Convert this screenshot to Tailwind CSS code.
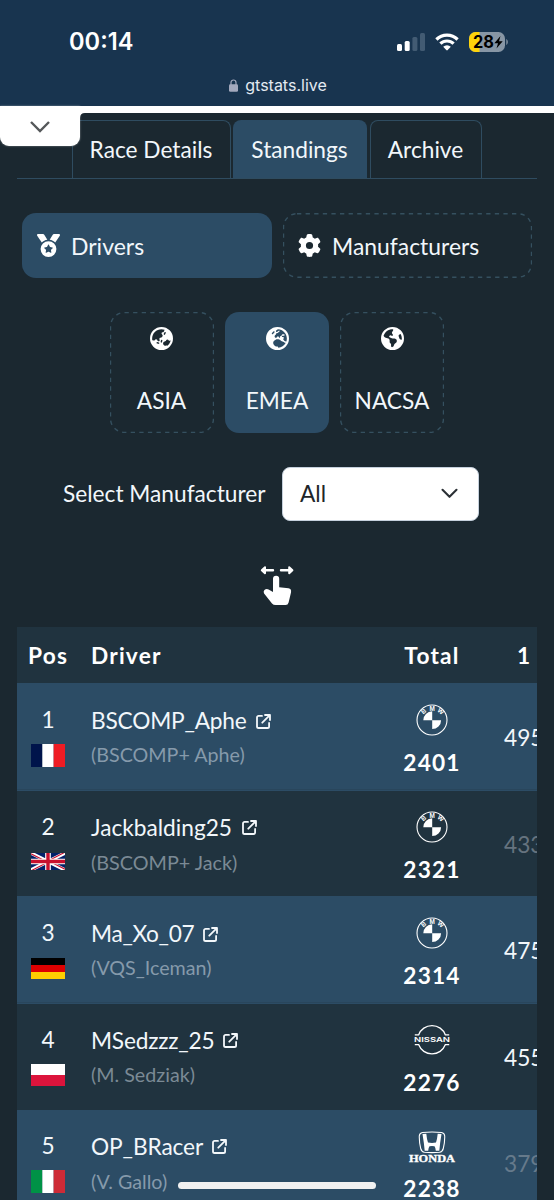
<!DOCTYPE html>
<html lang="en">
<head>
<meta charset="utf-8">
<title>gtstats.live</title>
<script src="https://cdn.jsdelivr.net/npm/@tailwindcss/browser@4"></script>
</head>
<body class="bg-[#1b2830]">
<svg class="hidden">
  <symbol id="ext" viewBox="0 0 15 15"><path d="M6 1.900H2.600A1.600 1.600 0 0 0 1 3.500V12.400A1.600 1.600 0 0 0 2.600 14H11.500A1.600 1.600 0 0 0 13.100 12.400V9M9 1H14V6M13.800 1.200L6.300 8.700" fill="none" stroke="#f4f8fb" stroke-width="1.800" stroke-linejoin="round" stroke-linecap="round"/></symbol>
  <symbol id="bmw" viewBox="0 0 32 32">
    <circle cx="16" cy="16" r="15" fill="none" stroke="#fff" stroke-width="1.100"/>
    <path d="M16.200 16.200V7.300A8.900 8.900 0 0 0 7.300 16.200ZM16.200 16.200V25.100A8.900 8.900 0 0 0 25.100 16.200Z" fill="#fff"/>
    <g fill="#fff" font-family="Liberation Sans, sans-serif" font-weight="700" font-size="6.400" text-anchor="middle">
      <text transform="translate(8.900 8.900) rotate(-40)">B</text><text x="16.200" y="6.600">M</text><text transform="translate(23.300 9) rotate(40)">W</text>
    </g>
  </symbol>
</svg>
<main class="relative w-[554px] h-[1200px] overflow-hidden text-[#f2f7fb] font-['Lato',sans-serif] text-[22.700px]">
  <header class="h-[106px] bg-[#18344f]">
    <div class="h-[70px] pt-[13px] pl-[69px] pr-[45px] flex items-center justify-between">
      <div class="font-['Inter',sans-serif] font-semibold text-[23.600px] leading-none text-white">00:14</div>
      <div class="flex items-center">
        <svg class="w-[29px] h-[20px]" viewBox="0 0 29 20"><rect x="0" y="12" width="5" height="7" rx="1.500" fill="#fff"/><rect x="7.700" y="9" width="5" height="10" rx="1.500" fill="#fff"/><rect x="15.400" y="5" width="5" height="14" rx="1.500" fill="#425b73"/><rect x="23" y="1" width="5" height="18" rx="1.500" fill="#425b73"/></svg>
        <svg class="ml-[9px] w-[24px] h-[18px]" viewBox="0 0 24 18"><g fill="none" stroke="#fff" stroke-width="3.200"><path d="M1.400 6.500A15 15 0 0 1 22.600 6.500"/><path d="M5.400 10.700A9.400 9.400 0 0 1 18.600 10.700"/></g><path d="M8.200 13.700A5.400 5.400 0 0 1 15.800 13.700L12.700 17.100Q12 17.700 11.300 17.100Z" fill="#fff"/></svg>
        <svg class="ml-[10px] w-[40px] h-[20px]" viewBox="0 0 40 20"><defs><clipPath id="batt"><rect width="36" height="20" rx="6.500"/></clipPath></defs><g clip-path="url(#batt)"><rect width="36" height="20" fill="#8796a5"/><rect width="10.500" height="20" fill="#fdd30a"/></g><path d="M37.300 7v6c2-.8 2-5.200 0-6z" fill="#8796a5"/><text x="4" y="16" font-family="Inter, sans-serif" font-weight="700" font-size="17" textLength="21" lengthAdjust="spacingAndGlyphs" fill="#000">28</text><path d="M31.500 4L25.300 11.200H29L27.500 16.500L33.700 9.200H30Z" fill="#000"/></svg>
      </div>
    </div>
    <div class="h-[30px] pl-[2px] flex items-center justify-center gap-[7px] font-['Inter',sans-serif] text-[16px] text-[#e3eaf2]">
      <svg class="w-[9px] h-[13px]" viewBox="0 0 9 13"><path d="M2 6V3.500a2.500 2.500 0 0 1 5 0V6" fill="none" stroke="#a3a9bd" stroke-width="1.200"/><rect y="5.300" width="9" height="7.400" rx="1.300" fill="#a3a9bd"/></svg>
      <span class="leading-none">gtstats.live</span>
    </div>
  </header>
  <div class="h-[7px] bg-white"></div>

  <nav class="mx-[17px] h-[66px] pt-[7px] pl-[55px] flex border-b border-[#2f4c60]">
    <div class="w-[159px] h-[58px] border border-b-0 border-[#2f4c60] rounded-t-[8px] flex items-center justify-center pt-[2px] pr-[1px]">Race Details</div>
    <div class="ml-[2px] w-[134px] h-[58px] bg-[#2c4c65] rounded-t-[8px] flex items-center justify-center pt-[2px] pr-[1px]">Standings</div>
    <div class="ml-[3px] w-[112px] h-[58px] border border-b-0 border-[#2f4c60] rounded-t-[8px] flex items-center justify-center pt-[2px] pr-[1px]">Archive</div>
  </nav>

  <section class="mt-[34px] ml-[22px] flex gap-[11px]">
    <div class="w-[250px] h-[65px] rounded-[14px] bg-[#2c4c65] flex items-center pl-[15px] gap-[11px]">
      <svg class="w-[23px] h-[23px]" viewBox="0 0 512 512" fill="#fff"><path d="M4.100 38.200C1.400 34.200 0 29.400 0 24.600C0 11 11 0 24.600 0H133.900c11.200 0 21.700 5.900 27.400 15.500l68.500 114.100c-48.200 6.100-91.300 28.600-123.400 61.900L4.100 38.200zm503.700 0L405.600 191.500c-32.100-33.300-75.200-55.800-123.400-61.900L350.700 15.500C356.500 5.900 366.900 0 378.100 0H487.400C501 0 512 11 512 24.600c0 4.800-1.400 9.600-4.100 13.600zM80 336a176 176 0 1 1 352 0A176 176 0 1 1 80 336zm184.400-94.900c-3.400-7-13.300-7-16.800 0l-22.400 45.400c-1.400 2.800-4 4.700-7 5.100L168 298.900c-7.700 1.100-10.700 10.500-5.200 16l36.300 35.400c2.200 2.200 3.200 5.200 2.700 8.300l-8.600 49.900c-1.300 7.600 6.700 13.500 13.600 9.900l44.800-23.600c2.700-1.400 6-1.400 8.700 0l44.800 23.600c6.900 3.600 14.900-2.200 13.600-9.900l-8.600-49.900c-.5-3 .5-6.100 2.700-8.300l36.300-35.400c5.600-5.400 2.500-14.800-5.200-16l-50.100-7.300c-3-.4-5.700-2.400-7-5.100l-22.400-45.400z"/></svg>
      <span class="pt-[1px] text-[23px]">Drivers</span>
    </div>
    <div class="relative w-[249px] h-[65px] flex items-center pl-[15px] gap-[11px]">
      <svg class="absolute inset-0 w-[249px] h-[65px]"><rect x=".5" y=".7" width="248" height="63.500" rx="13.500" fill="none" stroke="#35505f" stroke-width="1.400" stroke-dasharray="4.300 4.300"/></svg>
      <svg class="w-[23px] h-[23px]" viewBox="0 0 512 512" fill="#fff"><path d="M495.900 166.600c3.200 8.700 .5 18.400-6.400 24.600l-43.300 39.400c1.100 8.300 1.700 16.800 1.700 25.400s-.6 17.100-1.700 25.400l43.300 39.400c6.900 6.200 9.600 15.900 6.400 24.600c-4.400 11.900-9.700 23.300-15.800 34.300l-4.700 8.100c-6.600 11-14 21.400-22.100 31.200c-5.900 7.200-15.700 9.600-24.500 6.800l-55.700-17.700c-13.400 10.300-28.200 18.900-44 25.400l-12.500 57.100c-2 9.100-9 16.300-18.200 17.800c-13.800 2.300-28 3.500-42.500 3.500s-28.700-1.200-42.500-3.500c-9.200-1.500-16.200-8.700-18.200-17.800l-12.500-57.100c-15.800-6.500-30.600-15.100-44-25.400L83.100 425.900c-8.800 2.800-18.600 .3-24.500-6.800c-8.100-9.800-15.500-20.200-22.100-31.200l-4.700-8.100c-6.100-11-11.400-22.400-15.800-34.300c-3.200-8.700-.5-18.400 6.400-24.600l43.300-39.400C64.600 273.100 64 264.600 64 256s.6-17.100 1.700-25.400L22.400 191.200c-6.900-6.200-9.600-15.900-6.400-24.600c4.400-11.900 9.700-23.300 15.800-34.300l4.700-8.100c6.600-11 14-21.400 22.100-31.200c5.900-7.200 15.700-9.600 24.500-6.800l55.700 17.700c13.400-10.300 28.200-18.900 44-25.400l12.500-57.100c2-9.100 9-16.300 18.200-17.800C227.300 1.200 241.500 0 256 0s28.700 1.200 42.500 3.500c9.200 1.500 16.200 8.700 18.200 17.800l12.500 57.100c15.800 6.500 30.600 15.100 44 25.400l55.700-17.700c8.800-2.800 18.600-.3 24.500 6.800c8.100 9.800 15.500 20.200 22.100 31.200l4.700 8.100c6.100 11 11.400 22.400 15.800 34.300zM256 336a80 80 0 1 0 0-160 80 80 0 1 0 0 160z"/></svg>
      <span class="pt-[1px] text-[22.900px]">Manufacturers</span>
    </div>
  </section>

  <section class="mt-[34px] ml-[110px] flex gap-[11px]">
    <div class="relative w-[104px] h-[121px] pt-[15px] pr-[1px] flex flex-col items-center">
      <svg class="absolute inset-0 w-[104px] h-[121px]"><rect x=".5" y=".5" width="103" height="120" rx="14" fill="none" stroke="#35505f" stroke-width="1.400" stroke-dasharray="4.300 4.300"/></svg>
      <svg class="w-[23px] h-[23px]" viewBox="0 0 512 512" fill="#fff"><path d="M51.700 295.100l31.700 6.300c7.900 1.600 16-.9 21.700-6.600l15.400-15.400c11.600-11.600 31.100-8.400 38.400 6.200l9.300 18.500c4.800 9.600 14.600 15.700 25.400 15.700c15.200 0 26.100-14.600 21.700-29.200l-6-19.900c-4.600-15.400 6.900-30.900 23-30.900h2.300c13.400 0 25.900-6.700 33.300-17.800l10.700-16.100c5.600-8.500 5.300-19.600-.8-27.700l-16.100-21.500c-10.300-13.700-3.300-33.500 13.400-37.700l17-4.300c7.500-1.900 13.600-7.200 16.500-14.400l16.400-40.900C303.400 52.100 280.200 48 256 48C141.100 48 48 141.100 48 256c0 13.400 1.300 26.500 3.700 39.100zm407.700 4.600c-3-.3-6-.1-9 .8l-15.800 4.400c-6.700 1.900-13.800-.9-17.500-6.700l-2-3.100c-6-9.400-16.400-15.100-27.600-15.100s-21.600 5.700-27.600 15.100l-6.100 9.500c-1.400 2.200-3.400 4.100-5.700 5.300L312 330.100c-18.100 10.100-25.500 32.400-17 51.300l5.500 12.400c8.600 19.200 30.700 28.500 50.500 21.100l2.600-1c10-3.700 21.300-2.200 29.900 4.100l1.500 1.100c37.200-29.500 64.100-71.400 74.400-119.500zM0 256a256 256 0 1 1 512 0A256 256 0 1 1 0 256zm144.500 92.100c-2.100 8.600 3.100 17.300 11.600 19.400l32 8c8.600 2.100 17.300-3.100 19.400-11.600s-3.100-17.300-11.600-19.400l-32-8c-8.600-2.100-17.300 3.100-19.400 11.600zm92-20c-2.100 8.600 3.100 17.300 11.600 19.400s17.300-3.100 19.400-11.600l8-32c2.100-8.600-3.100-17.300-11.600-19.400s-17.300 3.100-19.400 11.600l-8 32zM343.200 113.700c-7.900-4-17.500-.7-21.500 7.200l-16 32c-4 7.900-.7 17.500 7.200 21.500s17.500 .7 21.500-7.200l16-32c4-7.900 .7-17.500-7.200-21.500z"/></svg>
      <span class="mt-[34px] leading-[34px]">ASIA</span>
    </div>
    <div class="w-[104px] h-[121px] pt-[15px] flex flex-col items-center bg-[#2c4c65] rounded-[14px]">
      <svg class="w-[23px] h-[23px]" viewBox="0 0 512 512" fill="#fff"><path d="M266.300 48.300L232.500 73.600c-5.400 4-8.500 10.400-8.500 17.100v9.100c0 6.800 5.500 12.300 12.300 12.300c2.400 0 4.800-.7 6.800-2.100l41.800-27.900c2-1.300 4.400-2.100 6.800-2.100h1c6.200 0 11.300 5.100 11.300 11.300c0 3-1.200 5.900-3.300 8l-19.900 19.900c-5.800 5.800-12.900 10.200-20.700 12.800l-26.500 8.800c-5.800 1.900-9.600 7.300-9.600 13.400c0 3.700-1.500 7.300-4.100 10l-17.900 17.900c-6.400 6.400-9.900 15-9.900 24v4.300c0 16.400 13.600 29.700 29.900 29.700c11 0 21.200-6.200 26.100-16l4-8.100c2.400-4.800 7.400-7.900 12.800-7.900c4.500 0 8.700 2.100 11.400 5.700l16.300 21.700c2.100 2.900 5.500 4.500 9.100 4.500c8.400 0 13.900-8.900 10.100-16.400l-1.100-2.300c-3.500-7 0-15.500 7.500-18l21.200-7.100c7.600-2.500 12.700-9.600 12.700-17.600c0-10.300 8.300-18.600 18.600-18.600H400c8.800 0 16 7.200 16 16s-7.200 16-16 16H379.300c-7.200 0-14.200 2.900-19.300 8l-4.700 4.700c-2.100 2.100-3.300 5-3.300 8c0 6.200 5.100 11.300 11.300 11.300h11.300c6 0 11.800 2.400 16 6.600l6.500 6.500c1.800 1.800 2.800 4.300 2.800 6.800s-1 5-2.800 6.800l-7.500 7.500C386 262 384 266.900 384 272s2 10 5.700 13.700L408 304c10.200 10.200 24.100 16 38.600 16H454c6.500-20.200 10-41.700 10-64c0-111.400-87.600-202.400-197.700-207.700zm172 307.900c-3.700-2.600-8.200-4.100-13-4.100c-6 0-11.800-2.400-16-6.600L396 332c-7.700-7.700-18-12-28.900-12c-9.700 0-19.200-3.500-26.600-9.800L314 287.400c-11.600-9.900-26.400-15.400-41.700-15.400H251.400c-12.600 0-25 3.700-35.500 10.700L188.500 301c-17.800 11.900-28.500 31.900-28.500 53.300v3.200c0 17 6.700 33.300 18.700 45.300l16 16c8.500 8.500 20 13.300 32 13.300H248c13.300 0 24 10.700 24 24c0 2.500 .4 5 1.100 7.300c71.300-5.800 132.500-47.600 165.200-107.200zM0 256a256 256 0 1 1 512 0A256 256 0 1 1 0 256zM187.300 100.700c-6.200-6.200-16.400-6.200-22.600 0l-32 32c-6.200 6.200-6.200 16.400 0 22.600s16.400 6.200 22.600 0l32-32c6.200-6.200 6.200-16.400 0-22.600z"/></svg>
      <span class="mt-[34px] leading-[34px]">EMEA</span>
    </div>
    <div class="relative w-[104px] h-[121px] pt-[15px] flex flex-col items-center">
      <svg class="absolute inset-0 w-[104px] h-[121px]"><rect x=".5" y=".5" width="103" height="120" rx="14" fill="none" stroke="#35505f" stroke-width="1.400" stroke-dasharray="4.300 4.300"/></svg>
      <svg class="w-[23px] h-[23px]" viewBox="0 0 512 512" fill="#fff"><path d="M57.700 193l9.400 16.400c8.300 14.500 21.900 25.200 38 29.800L163 255.700c17.200 4.900 29 20.600 29 38.500v39.900c0 11 6.200 21 16 25.900s16 14.900 16 25.900v39c0 15.600 14.900 26.900 29.900 22.600c16.100-4.600 28.600-17.500 32.700-33.800l2.800-11.200c4.200-16.900 15.200-31.400 30.300-40l8.100-4.600c15-8.500 24.200-24.500 24.200-41.700v-8.300c0-12.700-5.100-24.900-14.100-33.900l-3.900-3.900c-9-9-21.200-14.100-33.900-14.100H257c-11.100 0-22.100-2.900-31.800-8.400l-34.500-19.700c-4.300-2.500-7.600-6.500-9.200-11.200c-3.200-9.600 1.100-20 10.200-24.500l5.900-3c6.600-3.300 14.300-3.900 21.300-1.500l23.200 7.700c8.200 2.700 17.200-.4 21.900-7.500c4.700-7 4.200-16.300-1.200-22.800l-13.600-16.300c-10-12-9.900-29.500 .3-41.300l15.700-18.300c8.800-10.300 10.200-25 3.500-36.700l-2.400-4.200c-3.500-.2-6.900-.3-10.400-.3C163.100 48 84.400 108.900 57.700 193zM464 256c0-36.800-9.600-71.400-26.400-101.500L412 164.800c-15.700 6.300-23.800 23.800-18.500 39.800l16.900 50.700c3.500 10.400 12 18.300 22.600 20.900l29.100 7.300c1.200-9 1.800-18.200 1.800-27.500zM0 256a256 256 0 1 1 512 0A256 256 0 1 1 0 256z"/></svg>
      <span class="mt-[34px] leading-[34px]">NACSA</span>
    </div>
  </section>

  <section class="mt-[33px] ml-[63px] h-[55px] flex items-center">
    <span class="w-[219px] pt-[2px]">Select Manufacturer</span>
    <div class="w-[197px] h-[54px] bg-white border border-[#c5d0dc] rounded-[8px] flex items-center justify-between pl-[17px] pr-[20px] text-[#212529]">
      <span class="pt-[2px]">All</span>
      <svg class="w-[17px] h-[11px]" viewBox="0 0 17 11"><path d="M1.500 1.800L8.500 8.800L15.500 1.800" fill="none" stroke="#2b3035" stroke-width="2.100" stroke-linecap="round" stroke-linejoin="round"/></svg>
    </div>
  </section>

  <div class="mt-[44px] ml-[260px] h-[62.400px]">
    <svg class="w-[34px] h-[42px]" viewBox="0 0 34 42" fill="#fff"><path d="M5 5.300H13M21 5.300H29" stroke="#fff" stroke-width="2.400" stroke-linecap="round"/><path d="M1.800 5.300L5 2.300V8.300ZM32.400 5.300L29.200 2.300V8.300Z" stroke="#fff" stroke-width="2" stroke-linejoin="round"/><path d="M13 13.800a3.100 3.100 0 0 1 6.200 0V22.300L28.500 23.300Q31.700 23.900 31 27.400L28.600 37.500Q28 40 25.600 40H15.600Q13.400 40 12 38.400L4.100 28.600Q3 26.700 4.400 25.100Q6.200 23.400 8.600 24.400L13 27Z"/></svg>
  </div>

  <div class="mx-[17px] w-[520px] overflow-hidden leading-[30px]">
    <div class="h-[55.800px] pt-[2px] bg-[#20333f] flex items-center font-bold tracking-[1.200px] text-white">
      <div class="w-[62px] shrink-0 text-center">Pos</div><div class="w-[292px] shrink-0 pl-[12px]">Driver</div><div class="w-[122px] shrink-0 text-center">Total</div><div class="shrink-0 pl-[24px]">1</div>
    </div>

    <div class="h-[106.600px] bg-[#2c4c65] flex border-b border-[#29465c]">
      <div class="w-[62px] shrink-0 pt-[22px] flex flex-col items-center">1<span class="h-[40px] flex items-center"><svg class="w-[34px] h-[23px]" viewBox="0 0 3 2" preserveAspectRatio="none"><path fill="#00144b" d="M0 0h1v2H0z"/><path fill="#fff" d="M1 0h1v2H1z"/><path fill="#ef1c24" d="M2 0h1v2H2z"/></svg></span></div>
      <div class="w-[292px] shrink-0 pl-[12px] pt-[23px]"><div class="flex items-center gap-[9px]"><span class="tracking-[-0.200px]">BSCOMP_Aphe</span><svg class="w-[15px] h-[15px]"><use href="#ext"/></svg></div><div class="mt-[4px] text-[19.700px] text-[#869aab]">(BSCOMP+ Aphe)</div></div>
      <div class="w-[122px] shrink-0 pt-[21px] flex flex-col items-center"><svg class="w-[32px] h-[32px]"><use href="#bmw"/></svg><b class="mt-[12px] tracking-[1.200px] text-white">2401</b></div>
      <div class="shrink-0 pl-[11px] pt-[40px]">495</div>
    </div>

    <div class="h-[106.600px] bg-[#20333f] flex border-t border-[#2c4c65]">
      <div class="w-[62px] shrink-0 pt-[21px] flex flex-col items-center">2<span class="h-[40px] flex items-center"><svg class="w-[34px] h-[17px]" viewBox="0 0 60 30"><path fill="#012169" d="M0 0h60v30H0z"/><path d="M0 0L60 30M60 0L0 30" stroke="#fff" stroke-width="6"/><path d="M0 1.500L28 15.500M60 28.500L32 14.500M60 -1.500L30 14M0 31.500L30 16" stroke="#c8102e" stroke-width="2"/><path d="M30 0V30M0 15H60" stroke="#fff" stroke-width="10"/><path d="M30 0V30M0 15H60" stroke="#c8102e" stroke-width="6"/></svg></span></div>
      <div class="w-[292px] shrink-0 pl-[12px] pt-[22px]"><div class="flex items-center gap-[10px]">Jackbalding25<svg class="w-[15px] h-[15px]"><use href="#ext"/></svg></div><div class="mt-[4px] text-[19.800px] text-[#7b8a95]">(BSCOMP+ Jack)</div></div>
      <div class="w-[122px] shrink-0 pt-[20px] flex flex-col items-center"><svg class="w-[32px] h-[32px]"><use href="#bmw"/></svg><b class="mt-[12px] tracking-[1.200px] text-white">2321</b></div>
      <div class="shrink-0 pl-[11px] pt-[39px] text-[#66737f]">433</div>
    </div>

    <div class="h-[106.600px] bg-[#2c4c65] flex border-b border-[#29465c]">
      <div class="w-[62px] shrink-0 pt-[22px] flex flex-col items-center">3<span class="h-[40px] flex items-center"><svg class="w-[34px] h-[21px]" viewBox="0 0 5 3" preserveAspectRatio="none"><path d="M0 0h5v1H0z"/><path fill="#d00" d="M0 1h5v1H0z"/><path fill="#ffce00" d="M0 2h5v1H0z"/></svg></span></div>
      <div class="w-[292px] shrink-0 pl-[12px] pt-[23px]"><div class="flex items-center gap-[9px]"><span class="tracking-[-0.300px]">Ma_Xo_07</span><svg class="w-[15px] h-[15px]"><use href="#ext"/></svg></div><div class="mt-[4px] text-[19.700px] text-[#869aab]">(VQS_Iceman)</div></div>
      <div class="w-[122px] shrink-0 pt-[21px] flex flex-col items-center"><svg class="w-[32px] h-[32px]"><use href="#bmw"/></svg><b class="mt-[12px] tracking-[1.200px] text-white">2314</b></div>
      <div class="shrink-0 pl-[11px] pt-[40px]">475</div>
    </div>

    <div class="h-[106.600px] bg-[#20333f] flex border-t border-[#2c4c65]">
      <div class="w-[62px] shrink-0 pt-[21px] flex flex-col items-center">4<span class="h-[40px] flex items-center"><svg class="w-[34px] h-[22px]" viewBox="0 0 34 22"><path fill="#fff" d="M0 0h34v11H0z"/><path fill="#dc143c" d="M0 11h34v11H0z"/></svg></span></div>
      <div class="w-[292px] shrink-0 pl-[12px] pt-[22px]"><div class="flex items-center gap-[9px]"><span class="tracking-[-0.200px]">MSedzzz_25</span><svg class="w-[15px] h-[15px]"><use href="#ext"/></svg></div><div class="mt-[4px] text-[19.700px] text-[#7b8a95]">(M. Sedziak)</div></div>
      <div class="w-[122px] shrink-0 pt-[20px] flex flex-col items-center"><svg class="w-[38px] h-[32px]" viewBox="0 0 38 32"><path d="M1.800 10.900H5.600A14.300 14.300 0 0 1 32.400 10.900H36.200M1.800 20.600H5.600A14.300 14.300 0 0 0 32.400 20.600H36.200" fill="none" stroke="#fff" stroke-width="1.300"/><text x="1" y="18" font-family="Inter, sans-serif" font-weight="600" font-size="6.300" textLength="36" lengthAdjust="spacingAndGlyphs" fill="#fff">NISSAN</text></svg><b class="mt-[12px] tracking-[1.200px] text-white">2276</b></div>
      <div class="shrink-0 pl-[11px] pt-[39px]">455</div>
    </div>

    <div class="h-[106.600px] bg-[#2c4c65] flex">
      <div class="w-[62px] shrink-0 pt-[21px] flex flex-col items-center">5<span class="h-[42px] flex items-center"><svg class="w-[34px] h-[23px]" viewBox="0 0 3 2" preserveAspectRatio="none"><path fill="#009246" d="M0 0h1v2H0z"/><path fill="#fff" d="M1 0h1v2H1z"/><path fill="#ce2b37" d="M2 0h1v2H2z"/></svg></span></div>
      <div class="w-[292px] shrink-0 pl-[12px] pt-[22px]"><div class="flex items-center gap-[9px]"><span class="tracking-[-0.100px]">OP_BRacer</span><svg class="w-[15px] h-[15px]"><use href="#ext"/></svg></div><div class="mt-[5px] text-[19.700px] text-[#869aab]">(V. Gallo)</div></div>
      <div class="w-[122px] shrink-0 pt-[21px] flex flex-col items-center"><svg class="w-[48px] h-[32px]" viewBox="0 0 48 32"><path d="M14.500 1.500Q24 .4 33.500 1.500Q36.500 1.900 36.700 5Q36.900 11 35.300 17.500Q34.500 20.800 31.500 21.200Q24 22 16.500 21.200Q13.500 20.800 12.700 17.500Q11.100 11 11.300 5Q11.500 1.900 14.500 1.500Z" fill="none" stroke="#fff" stroke-width="1.100"/><path d="M14.500 3L18.300 2.700Q18.800 8 20 11.500Q24 12.300 28 11.500Q29.200 8 29.700 2.700L33.500 3Q32 12 31.300 19.800H27.800Q27.500 16.500 26.500 15.200Q24 14.600 21.500 15.200Q20.500 16.500 20.200 19.800H16.700Q16 12 14.500 3Z" fill="#fff"/><text x="1" y="30.700" font-family="Liberation Serif, serif" font-weight="700" font-size="9.600" textLength="46" lengthAdjust="spacingAndGlyphs" fill="#fff" stroke="#fff" stroke-width=".3">HONDA</text></svg><b class="mt-[11px] tracking-[1.200px] text-white">2238</b></div>
      <div class="shrink-0 pl-[11px] pt-[39px] text-[#667a8b]">379</div>
    </div>
  </div>

  <div class="absolute left-0 top-[106px] w-[80px] h-[40px] bg-white rounded-b-[9px] shadow-[0_0_2px_#ffffff80] flex items-center justify-center">
    <svg class="w-[20px] h-[12px] mt-[2px]" viewBox="0 0 20 12"><path d="M1 1L10 10L19 1" fill="none" stroke="#55585a" stroke-width="2.400"/></svg>
  </div>
  <svg class="absolute left-[80px] top-[113px] w-[5px] h-[5px]" viewBox="0 0 5 5"><path d="M0 0H5Q0 0 0 5Z" fill="#fff"/></svg>
  <div class="absolute left-[178px] top-[1182px] w-[198px] h-[7px] rounded-full bg-[#f1f1f1]"></div>
</main>
</body>
</html>
